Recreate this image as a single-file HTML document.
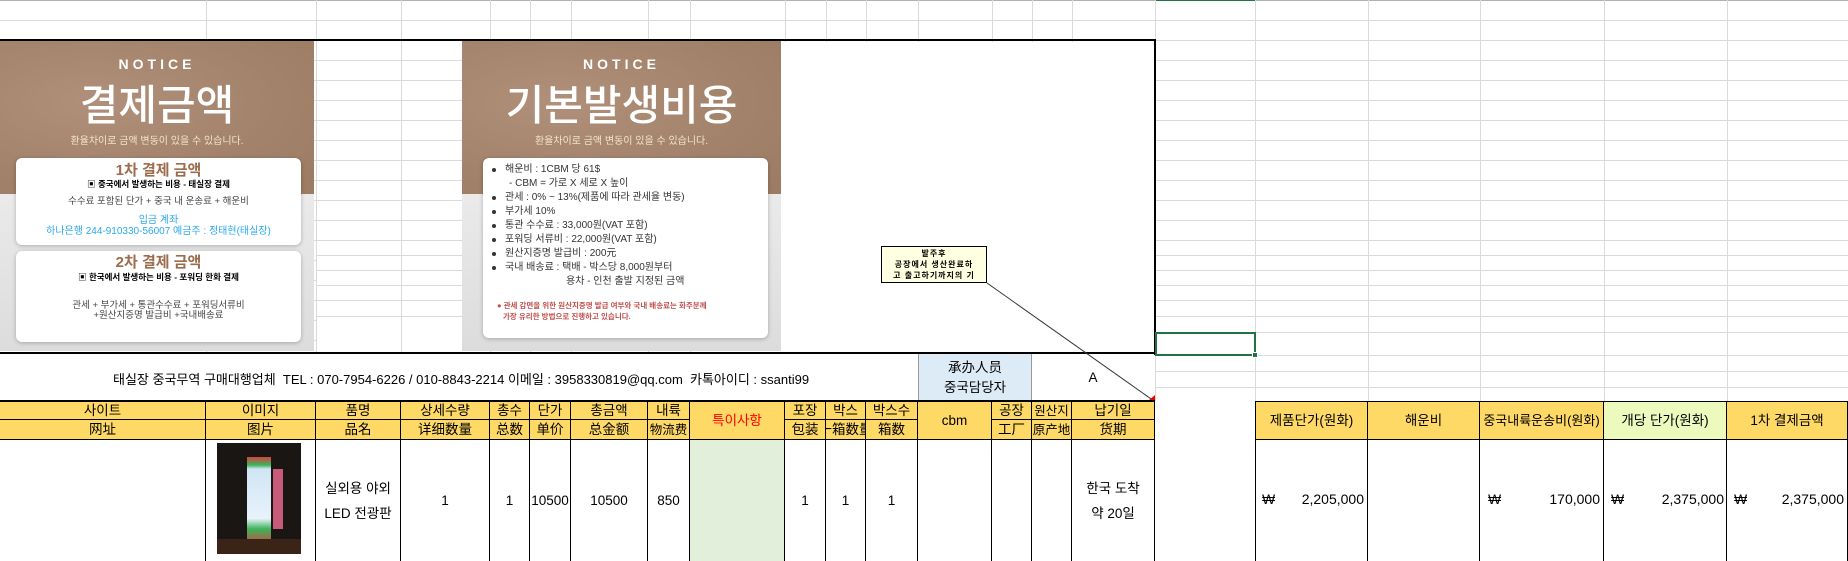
<!DOCTYPE html>
<html><head><meta charset="utf-8">
<style>
*{margin:0;padding:0;box-sizing:border-box}
body{width:1848px;height:561px;position:relative;overflow:hidden;background:#fff;font-family:"Liberation Sans","Noto Sans CJK KR",sans-serif;color:#000}
.a{position:absolute}
.v{position:absolute;width:1px;background:#dadada}
.h{position:absolute;height:1px;background:#dadada}
.c{position:absolute;display:flex;align-items:center;justify-content:center;text-align:center;font-size:13.5px;line-height:18px;white-space:nowrap;overflow:hidden}
.hd{background:#ffd966;border-right:1px solid #000;border-bottom:1px solid #000}
.dc{border-right:1px solid #000}
.notice{position:absolute;overflow:hidden;background:linear-gradient(#e2e2e2,#eaeaea 50%,#dcdcdc)}
.brown{position:absolute;left:0;top:0;right:0;height:153px;background:radial-gradient(ellipse at 30% 40%,#b0907a,#a2826a 60%,#9c7b63)}
.nt{position:absolute;left:0;right:0;text-align:center;color:#fff;line-height:1}
.card{position:absolute;background:#fff;border-radius:6px;box-shadow:0 1px 4px rgba(0,0,0,.25)}
.t{position:absolute;left:0;right:0;text-align:center;white-space:nowrap;line-height:1}
.li{position:absolute;left:22px;font-size:10px;line-height:1;color:#333;white-space:nowrap}
.b:before{content:"";position:absolute;left:-13px;top:3px;width:4px;height:4px;border-radius:50%;background:#333}
.won{position:absolute;font-size:14px}
</style></head><body>

<div class="h" style="left:0;top:0;width:1848px;background:#b0b0b0"></div>
<div class="a" style="left:1155px;top:0;width:100px;height:1px;background:#217346"></div>
<div class="a" style="left:0;top:1px;width:1848px;height:400px;background:repeating-linear-gradient(to bottom,transparent 0,transparent 19px,#dadada 19px,#dadada 20px)"></div>
<div class="a" style="left:1155px;top:241px;width:693px;height:160px;background:#fff"></div>
<div class="a" style="left:316px;top:241px;width:146px;height:113px;background:#fff"></div>
<div class="h" style="left:316px;top:255px;width:1532px"></div>
<div class="h" style="left:316px;top:270px;width:1532px"></div>
<div class="h" style="left:316px;top:285px;width:1532px"></div>
<div class="h" style="left:316px;top:300px;width:1532px"></div>
<div class="h" style="left:316px;top:316px;width:1532px"></div>
<div class="h" style="left:1155px;top:332px;width:693px"></div>
<div class="h" style="left:1155px;top:355px;width:693px"></div>
<div class="h" style="left:1155px;top:371px;width:693px"></div>
<div class="h" style="left:1155px;top:387px;width:693px"></div>
<div class="v" style="left:206px;top:0;height:401px"></div>
<div class="v" style="left:316px;top:0;height:401px"></div>
<div class="v" style="left:401px;top:0;height:401px"></div>
<div class="v" style="left:490px;top:0;height:401px"></div>
<div class="v" style="left:530px;top:0;height:401px"></div>
<div class="v" style="left:571px;top:0;height:401px"></div>
<div class="v" style="left:648px;top:0;height:401px"></div>
<div class="v" style="left:690px;top:0;height:401px"></div>
<div class="v" style="left:785px;top:0;height:401px"></div>
<div class="v" style="left:826px;top:0;height:401px"></div>
<div class="v" style="left:866px;top:0;height:401px"></div>
<div class="v" style="left:918px;top:0;height:401px"></div>
<div class="v" style="left:992px;top:0;height:401px"></div>
<div class="v" style="left:1032px;top:0;height:401px"></div>
<div class="v" style="left:1072px;top:0;height:401px"></div>
<div class="v" style="left:1155px;top:0;height:401px"></div>
<div class="v" style="left:1255px;top:0;height:401px"></div>
<div class="v" style="left:1368px;top:0;height:401px"></div>
<div class="v" style="left:1480px;top:0;height:401px"></div>
<div class="v" style="left:1604px;top:0;height:401px"></div>
<div class="v" style="left:1727px;top:0;height:401px"></div>

<div class="a" style="left:781px;top:42px;width:373px;height:311px;background:#fff"></div>
<div class="a" style="left:0;top:354px;width:1155px;height:47px;background:#fff"></div>

<!-- notice 1 -->
<div class="notice" style="left:0;top:41px;width:314px;height:310px">
  <div class="brown"></div>
  <div class="nt" style="top:16px;font-size:14px;font-weight:bold;letter-spacing:4px">NOTICE</div>
  <div class="nt" style="top:44px;font-size:42px;font-weight:500">결제금액</div>
  <div class="nt" style="top:96px;font-size:10px;color:#f3e6c4">환율차이로 금액 변동이 있을 수 있습니다.</div>
  <div class="card" style="left:16px;top:117px;width:285px;height:87px">
    <div class="t" style="top:5px;font-size:15px;font-weight:bold;color:#9c6c4c">1차 결제 금액</div>
    <div class="t" style="top:22px;font-size:8.5px;font-weight:bold">▣ 중국에서 발생하는 비용 - 태실장 결제</div>
    <div class="t" style="top:39px;font-size:9.5px;color:#444">수수료 포함된 단가 + 중국 내 운송료 + 해운비</div>
    <div class="t" style="top:58px;font-size:10px;color:#2aa8ee">입금 계좌</div>
    <div class="t" style="top:69px;font-size:10px;color:#2aa8ee">하나은행 244-910330-56007 예금주 : 정태현(태실장)</div>
  </div>
  <div class="card" style="left:16px;top:210px;width:285px;height:91px">
    <div class="t" style="top:4px;font-size:15px;font-weight:bold;color:#9c6c4c">2차 결제 금액</div>
    <div class="t" style="top:22px;font-size:8.5px;font-weight:bold">▣ 한국에서 발생하는 비용 - 포워딩 한화 결제</div>
    <div class="t" style="top:50px;font-size:9.5px;color:#444">관세 + 부가세 + 통관수수료 + 포워딩서류비</div>
    <div class="t" style="top:60px;font-size:9.5px;color:#444">+원산지증명 발급비 +국내배송료</div>
  </div>
</div>

<!-- notice 2 -->
<div class="notice" style="left:462px;top:41px;width:319px;height:310px">
  <div class="brown"></div>
  <div class="nt" style="top:16px;font-size:14px;font-weight:bold;letter-spacing:4px">NOTICE</div>
  <div class="nt" style="top:44px;font-size:42px;font-weight:500">기본발생비용</div>
  <div class="nt" style="top:96px;font-size:10px;color:#f3e6c4">환율차이로 금액 변동이 있을 수 있습니다.</div>
  <div class="card" style="left:21px;top:117px;width:285px;height:180px">
    <div class="li b" style="top:7px">해운비 : 1CBM 당 61$</div>
    <div class="li" style="top:21px;left:26px">- CBM = 가로 X 세로 X 높이</div>
    <div class="li b" style="top:35px">관세 : 0% ~ 13%(제품에 따라 관세율 변동)</div>
    <div class="li b" style="top:49px">부가세 10%</div>
    <div class="li b" style="top:63px">통관 수수료 : 33,000원(VAT 포함)</div>
    <div class="li b" style="top:77px">포워딩 서류비 : 22,000원(VAT 포함)</div>
    <div class="li b" style="top:91px">원산지증명 발급비 : 200元</div>
    <div class="li b" style="top:105px">국내 배송료 : 택배 - 박스당 8,000원부터</div>
    <div class="li" style="top:119px;left:83px">용차 - 인천 출발 지정된 금액</div>
    <div class="a" style="left:14px;top:142px;font-size:7.5px;font-weight:bold;color:#c0504d;white-space:nowrap">● 관세 감면을 위한 원산지증명 발급 여부와 국내 배송료는 화주분께</div>
    <div class="a" style="left:20px;top:153px;font-size:7.5px;font-weight:bold;color:#c0504d;white-space:nowrap">가장 유리한 방법으로 진행하고 있습니다.</div>
  </div>
</div>

<div class="a" style="left:0;top:39px;width:1156px;height:2px;background:#000"></div>
<div class="a" style="left:1154px;top:39px;width:2px;height:316px;background:#000"></div>
<div class="a" style="left:0;top:352px;width:1156px;height:2px;background:#000"></div>

<div class="a" style="left:881px;top:246px;width:106px;height:37px;background:#ffffe1;border:1px solid #000;font-size:8px;font-weight:bold;line-height:11px;text-align:center;padding-top:1px;letter-spacing:1px">발주후<br>공장에서 생산완료하<br>고 출고하기까지의 기</div>
<svg class="a" style="left:0;top:0" width="1848" height="561"><line x1="987" y1="283" x2="1154" y2="401" stroke="#333" stroke-width="1"/><polygon points="1148,401 1155,401 1155,395" fill="#e00"/></svg>

<div class="a" style="left:1155px;top:332px;width:101px;height:24px;border:2px solid #217346"></div>
<div class="a" style="left:1252px;top:352px;width:6px;height:6px;background:#217346;border:1px solid #fff"></div>

<div class="a" style="left:113px;top:369px;font-size:13px;white-space:nowrap">태실장 중국무역 구매대행업체&nbsp; TEL : 070-7954-6226 / 010-8843-2214 이메일 : 3958330819@qq.com&nbsp; 카톡아이디 : ssanti99</div>
<div class="c" style="left:918px;top:354px;width:114px;height:47px;background:#ddebf7;border-left:1px solid #999;border-right:1px solid #999;flex-direction:column;line-height:20px">承办人员<br>중국담당자</div>
<div class="c" style="left:1032px;top:354px;width:122px;height:47px">A</div>

<div class="a" style="left:0;top:400px;width:1155px;height:2px;background:#000"></div>
<div class="c hd" style="left:0;top:402px;width:206px;height:18px">사이트</div>
<div class="c hd" style="left:0;top:420px;width:206px;height:20px">网址</div>
<div class="c hd" style="left:206px;top:402px;width:110px;height:18px">이미지</div>
<div class="c hd" style="left:206px;top:420px;width:110px;height:20px">图片</div>
<div class="c hd" style="left:316px;top:402px;width:85px;height:18px">품명</div>
<div class="c hd" style="left:316px;top:420px;width:85px;height:20px">品名</div>
<div class="c hd" style="left:401px;top:402px;width:89px;height:18px">상세수량</div>
<div class="c hd" style="left:401px;top:420px;width:89px;height:20px">详细数量</div>
<div class="c hd" style="left:490px;top:402px;width:40px;height:18px">총수</div>
<div class="c hd" style="left:490px;top:420px;width:40px;height:20px">总数</div>
<div class="c hd" style="left:530px;top:402px;width:41px;height:18px">단가</div>
<div class="c hd" style="left:530px;top:420px;width:41px;height:20px">单价</div>
<div class="c hd" style="left:571px;top:402px;width:77px;height:18px">총금액</div>
<div class="c hd" style="left:571px;top:420px;width:77px;height:20px">总金额</div>
<div class="c hd" style="left:648px;top:402px;width:42px;height:18px">내륙</div>
<div class="c hd" style="left:648px;top:420px;width:42px;height:20px;font-size:12.5px">物流费</div>
<div class="c hd" style="left:690px;top:402px;width:95px;height:38px;color:#f00">특이사항</div>
<div class="c hd" style="left:785px;top:402px;width:41px;height:18px">포장</div>
<div class="c hd" style="left:785px;top:420px;width:41px;height:20px">包装</div>
<div class="c hd" style="left:826px;top:402px;width:40px;height:18px">박스</div>
<div class="c hd" style="left:826px;top:420px;width:40px;height:20px">一箱数量</div>
<div class="c hd" style="left:866px;top:402px;width:52px;height:18px">박스수</div>
<div class="c hd" style="left:866px;top:420px;width:52px;height:20px">箱数</div>
<div class="c hd" style="left:918px;top:402px;width:74px;height:38px">cbm</div>
<div class="c hd" style="left:992px;top:402px;width:40px;height:18px">공장</div>
<div class="c hd" style="left:992px;top:420px;width:40px;height:20px">工厂</div>
<div class="c hd" style="left:1032px;top:402px;width:40px;height:18px;font-size:12.5px">원산지</div>
<div class="c hd" style="left:1032px;top:420px;width:40px;height:20px;font-size:12.5px">原产地</div>
<div class="c hd" style="left:1072px;top:402px;width:83px;height:18px">납기일</div>
<div class="c hd" style="left:1072px;top:420px;width:83px;height:20px">货期</div>

<div class="c dc" style="left:0;top:440px;width:206px;height:121px"></div>
<div class="c dc" style="left:206px;top:440px;width:110px;height:121px"></div>
<div class="a" style="left:217px;top:443px;width:84px;height:111px;background:#1a1614">
  <div class="a" style="left:30px;top:14px;width:24px;height:88px;background:linear-gradient(#d94040 0,#3bb35a 8px,#cfe6f5 12px,#e8f2fa 70%,#3bb35a 72px,#d94040 88px)"></div>
  <div class="a" style="left:56px;top:26px;width:10px;height:60px;background:#c85a7a"></div>
  <div class="a" style="left:0;top:96px;width:84px;height:15px;background:#3a2418"></div>
</div>
<div class="c dc" style="left:316px;top:440px;width:85px;height:121px;line-height:25px;white-space:normal">실외용 야외<br>LED 전광판</div>
<div class="c dc" style="left:401px;top:440px;width:89px;height:121px">1</div>
<div class="c dc" style="left:490px;top:440px;width:40px;height:121px">1</div>
<div class="c dc" style="left:530px;top:440px;width:41px;height:121px">10500</div>
<div class="c dc" style="left:571px;top:440px;width:77px;height:121px">10500</div>
<div class="c dc" style="left:648px;top:440px;width:42px;height:121px">850</div>
<div class="c dc" style="left:690px;top:440px;width:95px;height:121px;background:#e2efda"></div>
<div class="c dc" style="left:785px;top:440px;width:41px;height:121px">1</div>
<div class="c dc" style="left:826px;top:440px;width:40px;height:121px">1</div>
<div class="c dc" style="left:866px;top:440px;width:52px;height:121px">1</div>
<div class="c dc" style="left:918px;top:440px;width:74px;height:121px"></div>
<div class="c dc" style="left:992px;top:440px;width:40px;height:121px"></div>
<div class="c dc" style="left:1032px;top:440px;width:40px;height:121px"></div>
<div class="c dc" style="left:1072px;top:440px;width:83px;height:121px;line-height:25px;white-space:normal">한국 도착<br>약 20일</div>

<div class="a" style="left:1255px;top:401px;width:593px;height:1px;background:#000"></div>
<div class="c hd" style="left:1255px;top:402px;width:113px;height:38px;border-left:1px solid #000">제품단가(원화)</div>
<div class="c hd" style="left:1368px;top:402px;width:112px;height:38px">해운비</div>
<div class="c hd" style="left:1480px;top:402px;width:124px;height:38px;font-size:13px">중국내륙운송비(원화)</div>
<div class="c hd" style="left:1604px;top:402px;width:123px;height:38px;background:#ecfbbd">개당 단가(원화)</div>
<div class="c hd" style="left:1727px;top:402px;width:121px;height:38px">1차 결제금액</div>
<div class="c dc" style="left:1255px;top:440px;width:113px;height:121px;border-left:1px solid #000"></div>
<div class="c dc" style="left:1368px;top:440px;width:112px;height:121px"></div>
<div class="c dc" style="left:1480px;top:440px;width:124px;height:121px"></div>
<div class="c dc" style="left:1604px;top:440px;width:123px;height:121px"></div>
<div class="c dc" style="left:1727px;top:440px;width:121px;height:121px"></div>
<div class="won" style="left:1262px;top:491px">₩</div><div class="won" style="left:1300px;top:491px;width:64px;text-align:right">2,205,000</div>
<div class="won" style="left:1488px;top:491px">₩</div><div class="won" style="left:1530px;top:491px;width:70px;text-align:right">170,000</div>
<div class="won" style="left:1611px;top:491px">₩</div><div class="won" style="left:1650px;top:491px;width:74px;text-align:right">2,375,000</div>
<div class="won" style="left:1734px;top:491px">₩</div><div class="won" style="left:1770px;top:491px;width:74px;text-align:right">2,375,000</div>

</body></html>
